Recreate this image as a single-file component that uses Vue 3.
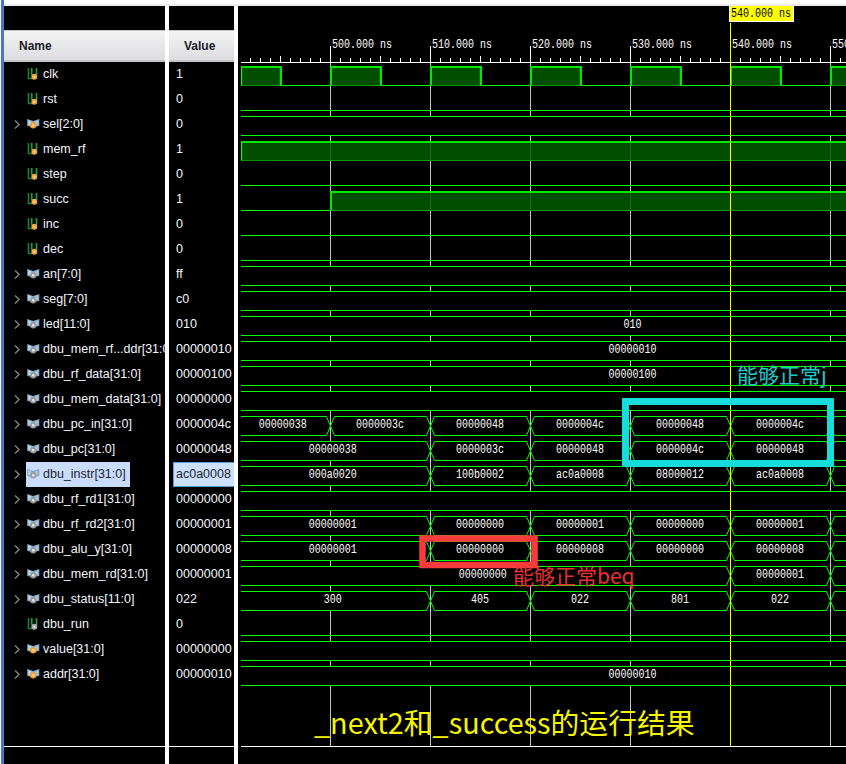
<script setup>
const signals = [
  { n: 'clk', v: '1', bit: 1, dot: 'o' },
  { n: 'rst', v: '0', bit: 1, dot: 'o' },
  { n: 'sel[2:0]', v: '0', dot: 'o' },
  { n: 'mem_rf', v: '1', bit: 1, dot: 'o' },
  { n: 'step', v: '0', bit: 1, dot: 'o' },
  { n: 'succ', v: '1', bit: 1, dot: 'o' },
  { n: 'inc', v: '0', bit: 1, dot: 'o' },
  { n: 'dec', v: '0', bit: 1, dot: 'o' },
  { n: 'an[7:0]', v: 'ff', dot: 'g' },
  { n: 'seg[7:0]', v: 'c0', dot: 'g' },
  { n: 'led[11:0]', v: '010', dot: 'g' },
  { n: 'dbu_mem_rf...ddr[31:0]', v: '00000010', dot: 'g' },
  { n: 'dbu_rf_data[31:0]', v: '00000100', dot: 'g' },
  { n: 'dbu_mem_data[31:0]', v: '00000000', dot: 'g' },
  { n: 'dbu_pc_in[31:0]', v: '0000004c', dot: 'g' },
  { n: 'dbu_pc[31:0]', v: '00000048', dot: 'g' },
  { n: 'dbu_instr[31:0]', v: 'ac0a0008', dot: 'g', selected: 1 },
  { n: 'dbu_rf_rd1[31:0]', v: '00000000', dot: 'g' },
  { n: 'dbu_rf_rd2[31:0]', v: '00000001', dot: 'g' },
  { n: 'dbu_alu_y[31:0]', v: '00000008', dot: 'g' },
  { n: 'dbu_mem_rd[31:0]', v: '00000001', dot: 'g' },
  { n: 'dbu_status[11:0]', v: '022', dot: 'g' },
  { n: 'dbu_run', v: '0', bit: 1, dot: 'g' },
  { n: 'value[31:0]', v: '00000000', dot: 'o' },
  { n: 'addr[31:0]', v: '00000010', dot: 'o' },
]

const top = i => 66.5 + 25 * i
const bot = i => 85.5 + 25 * i

const grid = [330.5, 430.5, 530.5, 630.5, 730.5, 830.5]
const ticks = []
for (let x = 250.5; x < 846; x += 10) {
  const k = Math.round(x - 0.5)
  ticks.push({ x, y: k % 100 === 30 ? 46 : k % 50 === 30 ? 56 : 58 })
}
const labels = grid.map((x, i) => ({ x: x + 1.5, t: `${500 + i * 10}.000 ns` }))

// levels of the one-bit signals: list of high spans per row
const clkHigh = [[241.5, 280.5], [330.5, 380.5], [430.5, 480.5], [530.5, 580.5], [630.5, 680.5], [730.5, 780.5], [830.5, 860]]
const highs = []
clkHigh.forEach(s => highs.push({ i: 0, s }))
highs.push({ i: 3, s: [241.5, 860] })
highs.push({ i: 5, s: [330.5, 860] })

function bitPath(i, spans) {
  let d = `M241 ${bot(i)}`
  spans.forEach(([a, b]) => {
    d += ` H${a} V${top(i)} H${b} V${bot(i)}`
  })
  return d + ' H860'
}
const bitSpans = { 0: clkHigh, 1: [], 3: [[241.5, 860]], 4: [], 5: [[330.5, 860]], 6: [], 7: [], 22: [] }
const bitPaths = Object.keys(bitSpans).map(k => bitPath(+k, bitSpans[k]))

// the bright, heavier edge along the top of each high level
const edges = highs.map(({ i, s: [a, b] }) => {
  const t = top(i) + 0.5
  const start = a < 242 ? `M${a} ${t}` : `M${a + 0.5} ${bot(i)} V${t}`
  return `${start} H${b + 0.5}` + (b < 846 ? ` V${bot(i)}` : '')
})

// bus rows: values between the change points
const C = 236
const E = 860
const busRows = [
  { i: 2, segs: [[C, E]] },
  { i: 8, segs: [[C, E]] },
  { i: 9, segs: [[C, E]] },
  { i: 10, segs: [[C, 1030, '010']] },
  { i: 11, segs: [[C, 1030, '00000010']] },
  { i: 12, segs: [[C, 1030, '00000100']] },
  { i: 13, segs: [[C, E]] },
  { i: 14, segs: [[C, 330.5, '00000038'], [330.5, 430.5, '0000003c'], [430.5, 530.5, '00000048'], [530.5, 630.5, '0000004c'], [630.5, 730.5, '00000048'], [730.5, 830.5, '0000004c'], [830.5, E]] },
  { i: 15, segs: [[C, 430.5, '00000038'], [430.5, 530.5, '0000003c'], [530.5, 630.5, '00000048'], [630.5, 730.5, '0000004c'], [730.5, 830.5, '00000048'], [830.5, E]] },
  { i: 16, segs: [[C, 430.5, '000a0020'], [430.5, 530.5, '100b0002'], [530.5, 630.5, 'ac0a0008'], [630.5, 730.5, '08000012'], [730.5, 830.5, 'ac0a0008'], [830.5, E]] },
  { i: 17, segs: [[C, E]] },
  { i: 18, segs: [[C, 430.5, '00000001'], [430.5, 530.5, '00000000'], [530.5, 630.5, '00000001'], [630.5, 730.5, '00000000'], [730.5, 830.5, '00000001'], [830.5, E]] },
  { i: 19, segs: [[C, 430.5, '00000001'], [430.5, 530.5, '00000000'], [530.5, 630.5, '00000008'], [630.5, 730.5, '00000000'], [730.5, 830.5, '00000008'], [830.5, E]] },
  { i: 20, segs: [[C, 730.5, '00000000'], [730.5, 830.5, '00000001'], [830.5, E]] },
  { i: 21, segs: [[C, 430.5, '300'], [430.5, 530.5, '405'], [530.5, 630.5, '022'], [630.5, 730.5, '801'], [730.5, 830.5, '022'], [830.5, E]] },
  { i: 23, segs: [[C, E]] },
  { i: 24, segs: [[C, 1030, '00000010']] },
]

const hexes = []
const texts = []
busRows.forEach(({ i, segs }) => {
  const t = top(i)
  const b = bot(i)
  const m = (t + b) / 2
  segs.forEach(([s, e, label]) => {
    hexes.push(`M${s} ${m} L${s + 4} ${t} H${e - 4} L${e} ${m} L${e - 4} ${b} H${s + 4} Z`)
    if (label) texts.push({ x: (s + e) / 2 - 0.5, y: t + 11, t: label, w: label.length * 6 })
  })
})
</script>

<template>
  <div class="page">
    <div class="top-strip"></div>
    <div class="main">
      <section class="col col-name">
        <div class="spacer"></div>
        <div class="head head-name">Name</div>
        <div v-for="s in signals" :key="s.n" class="row">
          <svg class="chev" width="6" height="10" viewBox="0 0 6 10">
            <polyline v-if="!s.bit" points="1,0.5 5,4.5 1,8.5" fill="none" stroke="#808080" stroke-width="1.5" />
          </svg>
          <div class="entry" :class="{ picked: s.selected }">
            <svg class="ico" width="14" height="16" viewBox="0 0 14 16">
              <template v-if="s.bit">
                <polyline points="2.5,2 2.5,12.5 6,12.5" fill="none" stroke="#12853a" stroke-width="1.6" />
                <polyline points="5.8,2 5.8,9" fill="none" stroke="#1fbf4c" stroke-width="1.3" />
                <polyline points="10.5,2 10.5,9" fill="none" stroke="#17a043" stroke-width="1.7" />
                <circle cx="8.3" cy="10.8" r="3" :fill="s.dot === 'o' ? '#f2a23c' : '#a8a8a8'" />
                <circle cx="8.3" cy="10.8" r="1.1" :fill="s.dot === 'o' ? '#ffd9a0' : '#e8e8e8'" />
              </template>
              <template v-else>
                <polygon points="1.2,3 7.2,5 13.3,3 13.3,10 7.2,11 1.2,10" fill="#7ea6c4" />
                <polygon points="2.2,4 5.5,5.4 5.5,9 2.2,9" fill="#b8d4e6" />
                <polygon points="9,5.4 12.3,4 12.3,9 9,9" fill="#a4c4da" />
                <circle cx="7.2" cy="9.3" r="3.2" :fill="s.dot === 'o' ? '#f2a23c' : '#9c9c9c'" />
                <circle cx="7.2" cy="9.3" r="1.2" :fill="s.dot === 'o' ? '#ffd9a0' : '#ececec'" />
              </template>
            </svg>
            <span class="label">{{ s.n }}</span>
          </div>
        </div>
        <div class="fill"></div>
        <div class="rule"></div>
        <div class="foot"></div>
      </section>

      <section class="col col-value">
        <div class="spacer"></div>
        <div class="head head-value">Value</div>
        <div v-for="s in signals" :key="s.n" class="row val" :class="{ 'val-picked': s.selected }">{{ s.v }}</div>
        <div class="fill"></div>
        <div class="rule"></div>
        <div class="foot"></div>
      </section>

      <section class="wave">
        <svg width="608" height="758" viewBox="238 6 608 758" class="wave-svg">
          <defs>
            <clipPath id="plot"><rect x="241" y="0" width="605" height="746" /></clipPath>
          </defs>

          <!-- ruler -->
          <line x1="241" x2="846" y1="62.5" y2="62.5" stroke="#fff" />
          <line v-for="t in ticks" :key="t.x" :x1="t.x" :x2="t.x" :y1="t.y" y2="62" stroke="#fff" />
          <text v-for="l in labels" :key="l.t" :x="l.x" y="48" class="mono" textLength="60" lengthAdjust="spacingAndGlyphs">{{ l.t }}</text>

          <!-- grid -->
          <line v-for="x in grid" :key="x" :x1="x" :x2="x" y1="63" y2="746" stroke="#c4c4c4" />

          <g clip-path="url(#plot)">
            <!-- one-bit high levels -->
            <rect v-for="(h, k) in highs" :key="k" :x="h.s[0] + 0.5" :y="top(h.i) + 0.5" :width="h.s[1] - h.s[0] - 1" height="18.5" fill="rgba(0,90,0,.85)" stroke="#009a00" />
            <path v-for="(d, k) in bitPaths" :key="k" :d="d" fill="none" stroke="#00ff00" />
            <path v-for="(d, k) in edges" :key="k" :d="d" fill="none" stroke="#00e800" stroke-width="2" />

            <!-- buses -->
            <path v-for="(d, k) in hexes" :key="k" :d="d" fill="#000" stroke="#00ff00" />
          </g>

          <text v-for="(t, k) in texts" :key="k" :x="t.x - t.w / 2" :y="t.y" class="mono" :textLength="t.w" lengthAdjust="spacingAndGlyphs">{{ t.t }}</text>

          <!-- cursor -->
          <line x1="730.5" x2="730.5" y1="23" y2="746" stroke="#ffff00" />
          <rect x="729.5" y="5.5" width="64" height="16" fill="#ffff00" stroke="#fff" />
          <text x="731" y="17" class="mono flag" textLength="60" lengthAdjust="spacingAndGlyphs">540.000 ns</text>

          <line x1="241" x2="846" y1="746.5" y2="746.5" stroke="#fff" />

          <!-- hand-drawn notes -->
          <rect x="625.5" y="401.5" width="205" height="62" fill="none" stroke="#17dcdc" stroke-width="7" />
          <rect x="422.5" y="538.5" width="112" height="26.5" fill="none" stroke="#f93b3b" stroke-width="6.5" />
          <text x="737" y="383" class="note note-cyan">能够正常j</text>
          <text x="513" y="584" class="note note-red">能够正常beq</text>
          <text x="314" y="734" class="caption">_next2和_success的运行结果</text>
        </svg>
      </section>
    </div>
  </div>
</template>

<style scoped>
.page {
  width: 846px;
  height: 764px;
  overflow: hidden;
  background: linear-gradient(to right, #fff 1px, #4a78c6 1px, #4a78c6 4px, #fff 4px);
  display: flex;
  flex-direction: column;
  font-family: "Liberation Sans", Arial, sans-serif;
}
.top-strip {
  height: 6px;
  flex: none;
  margin-left: 4px;
  background: #fff;
  border-bottom: 2px solid #ececec;
  box-sizing: border-box;
}
.main {
  flex: 1;
  min-height: 0;
  display: flex;
  gap: 4px;
  padding-left: 4px;
}
.col {
  background: #000;
  display: flex;
  flex-direction: column;
  flex: none;
  overflow: hidden;
}
.col-name { width: 161px; }
.col-value { width: 65px; }
.spacer { height: 24px; flex: none; }
.head {
  height: 32px;
  flex: none;
  box-sizing: border-box;
  border-top: 1px solid #c4c4c4;
  border-bottom: 2px solid #c4c4c4;
  background: linear-gradient(#f3f3f3, #dddde2);
  font-weight: 700;
  font-size: 12px;
  line-height: 30px;
  color: #1c1c28;
}
.head-name { padding-left: 15px; }
.head-value { padding-left: 15px; }
.row {
  height: 25px;
  flex: none;
  display: flex;
  align-items: stretch;
  color: #f2f6ff;
  font-size: 12.5px;
  line-height: 24px;
  white-space: nowrap;
}
.chev {
  margin: 8px 6px 0 10px;
  flex: none;
}
.entry {
  display: flex;
  padding-right: 4px;
}
.picked {
  background: #c9dcfb;
  color: #1c2430;
}
.ico {
  margin-top: 4px;
  flex: none;
}
.label {
  padding-left: 3px;
}
.val {
  padding-left: 7px;
}
.val-picked {
  margin-left: 4px;
  padding-left: 2px;
  border: 1px solid #5b9bd5;
  border-right: 0;
  box-sizing: border-box;
  background: #cde0fb;
  color: #1c2430;
  line-height: 22px;
}
.fill { flex: 1; }
.rule { height: 1px; background: #fff; flex: none; }
.foot { height: 17px; flex: none; }
.wave {
  flex: 1;
  min-width: 0;
  background: #000;
}
.wave-svg {
  display: block;
}
.mono {
  font-family: "Liberation Mono", monospace;
  font-size: 12.5px;
  fill: #fff;
}
.flag {
  fill: #000;
}
.note {
  font-family: "Noto Sans CJK SC", sans-serif;
  font-size: 21px;
}
.note-cyan { fill: #1fc9c9; }
.note-red { fill: #e83030; }
.caption {
  font-family: "Noto Sans CJK SC", sans-serif;
  font-size: 28.8px;
  fill: #f5f500;
}
</style>
